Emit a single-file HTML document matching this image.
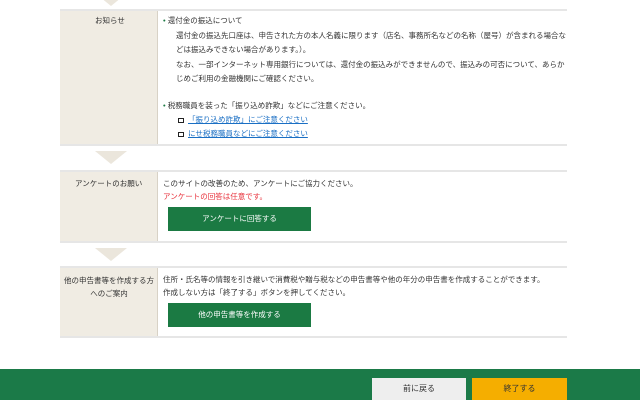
<!DOCTYPE html>
<html><head><meta charset="utf-8"><style>
*{margin:0;padding:0;box-sizing:border-box}
body{width:640px;height:400px;overflow:hidden;background:#fff;font-family:"Liberation Sans","Noto Sans CJK JP",sans-serif;font-size:7.5px;color:#333;position:relative}
.a{position:absolute;white-space:nowrap}
.lab{position:absolute;left:60px;width:98px;background:#f0ece3;border-right:1px solid #d8d2c6;text-align:center}
.row{position:absolute;left:60px;width:507px;border-top:2px solid #e6e6e6;border-bottom:2px solid #e6e6e6}
.tri{position:absolute;width:0;height:0;border-left:16px solid transparent;border-right:16px solid transparent;border-top:13px solid #ebe6dc}
.btn{position:absolute;left:168px;width:143px;height:24px;background:#1b7a43;color:#fff;text-align:center;line-height:24px;font-size:7.5px}
.dot{color:#1b7a43}
a{color:#1a6fc4;text-decoration:underline}
.sq{display:inline-block;width:6px;height:5px;border:1.5px solid #222;margin-right:4px;vertical-align:-1px}
</style></head><body>
<div class="tri" style="left:95px;top:-7px"></div>
<div class="row" style="top:9px;height:137px"></div>
<div class="lab" style="top:11px;height:133px"></div>
<div class="a" style="left:95px;top:15px">お知らせ</div>
<div class="a" style="left:163px;top:15px"><span class="dot">•</span> 還付金の振込について</div>
<div class="a" style="left:176px;top:29px;line-height:14.3px">還付金の振込先口座は、申告された方の本人名義に限ります（店名、事務所名などの名称（屋号）が含まれる場合な<br>どは振込みできない場合があります。）。<br>なお、一部インターネット専用銀行については、還付金の振込みができませんので、振込みの可否について、あらか<br>じめご利用の金融機関にご確認ください。</div>
<div class="a" style="left:163px;top:100px"><span class="dot">•</span> 税務職員を装った「振り込め詐欺」などにご注意ください。</div>
<div class="a" style="left:178px;top:114px"><span class="sq"></span><a>「振り込め詐欺」にご注意ください</a></div>
<div class="a" style="left:178px;top:128px"><span class="sq"></span><a>にせ税務職員などにご注意ください</a></div>

<div class="tri" style="left:95px;top:151px"></div>
<div class="row" style="top:170px;height:73px"></div>
<div class="lab" style="top:172px;height:69px"></div>
<div class="a" style="left:75px;top:178px">アンケートのお願い</div>
<div class="a" style="left:163px;top:178px">このサイトの改善のため、アンケートにご協力ください。</div>
<div class="a" style="left:163px;top:191px;color:#e8323c">アンケートの回答は任意です。</div>
<div class="btn" style="top:207px">アンケートに回答する</div>

<div class="tri" style="left:95px;top:248px"></div>
<div class="row" style="top:266px;height:72px"></div>
<div class="lab" style="top:268px;height:68px"></div>
<div class="a" style="left:60px;width:98px;text-align:center;top:274px;line-height:13px">他の申告書等を作成する方<br>へのご案内</div>
<div class="a" style="left:163px;top:274px">住所・氏名等の情報を引き継いで消費税や贈与税などの申告書等や他の年分の申告書を作成することができます。</div>
<div class="a" style="left:163px;top:287px">作成しない方は「終了する」ボタンを押してください。</div>
<div class="btn" style="top:303px">他の申告書等を作成する</div>

<div style="position:absolute;left:0;top:369px;width:640px;height:31px;background:#1b7a48"></div>
<div class="a" style="left:372px;top:378px;width:94px;height:22px;background:#eeeeee;text-align:center;line-height:22px;font-size:8px;color:#333">前に戻る</div>
<div class="a" style="left:472px;top:378px;width:95px;height:22px;background:#f5ae00;text-align:center;line-height:22px;font-size:8px;color:#333">終了する</div>
</body></html>
